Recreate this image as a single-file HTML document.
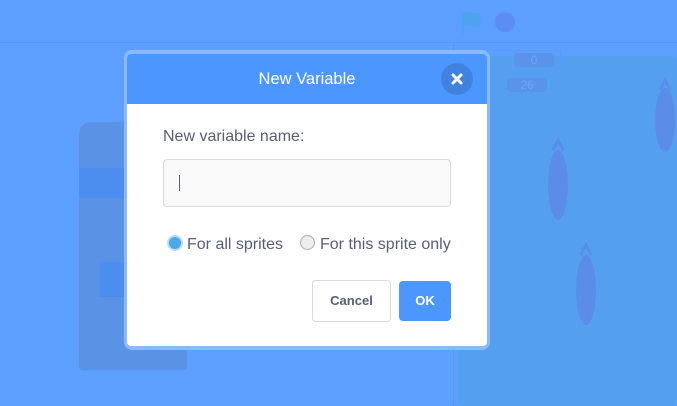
<!DOCTYPE html>
<html><head><style>
body{margin:0;width:677px;height:406px;background:#5c9fff;position:relative;overflow:hidden;font-family:"Liberation Sans",sans-serif}
.a{position:absolute}
</style></head><body>
<div class="a" style="left:0;top:0;width:677px;height:42px;background:#5c9fff;border-bottom:1px solid #5597f5"></div>
<div class="a" style="left:453px;top:43px;width:1px;height:363px;background:#5597f5"></div>
<div class="a" style="left:458px;top:56px;width:219px;height:350px;background:#55a0ee;border-radius:6px"></div>
<svg class="a" style="left:460px;top:10px" width="60" height="26"><path d="M3 2v24M3 3c6-3 10 3 17 0v12c-7 3-11-3-17 0z" fill="#4ea3f0" stroke="#4ea3f0"/><circle cx="45" cy="12" r="10" fill="#5b8df5"/></svg>
<div class="a" style="left:485px;top:50px;width:74px;height:18px;border:1px solid #5a9af8;border-radius:4px"></div>
<div class="a" style="left:514px;top:53px;width:40px;height:14px;background:#5b93ea;border-radius:4px;color:#6aa7f5;font-size:12px;text-align:center">0</div>
<div class="a" style="left:480px;top:75px;width:74px;height:18px;border:1px solid #5a9af8;border-radius:4px"></div>
<div class="a" style="left:507px;top:78px;width:40px;height:14px;background:#5b93ea;border-radius:4px;color:#6aa7f5;font-size:12px;text-align:center">26</div>
<svg class="a" style="left:535px;top:75px" width="142" height="260" fill="#5b8de8">
<ellipse cx="130" cy="45" rx="10" ry="32"/><ellipse cx="23" cy="110" rx="10" ry="35"/><ellipse cx="51" cy="215" rx="10" ry="35"/>
<path d="M125 15l5-10 5 10M18 75l5-10 5 10M46 180l5-10 5 10" stroke="#5b8de8" stroke-width="3" fill="none"/></svg>
<div class="a" style="left:79px;top:122px;width:108px;height:248px;background:#5a92e6;border-radius:12px 12px 4px 4px"></div>
<div class="a" style="left:79px;top:168px;width:50px;height:30px;background:#4c8df0"></div>
<div class="a" style="left:100px;top:262px;width:30px;height:35px;background:#4c8df0"></div>
<div class="a" style="left:124px;top:50px;width:366px;height:300px;background:#8ab9ff;border-radius:8px"></div>
<div class="a" style="left:127px;top:54px;width:360px;height:292px;background:#fff;border-radius:4px;overflow:hidden">
 <div style="height:50px;background:#4c97ff;color:#fff;font-size:16.5px;text-align:center;line-height:50px">New Variable</div>
 <div class="a" style="left:314px;top:9px;width:32px;height:32px;border-radius:50%;background:#3f83de"></div>
 <svg class="a" style="left:324px;top:19px" width="12" height="12"><path d="M2 2l8 8M10 2l-8 8" stroke="#fff" stroke-width="3" stroke-linecap="round"/></svg>
 <div class="a" style="left:36px;top:74px;color:#575e75;font-size:16px">New variable name:</div>
 <div class="a" style="left:36px;top:105px;width:286px;height:46px;border:1px solid #d9d9d9;border-radius:4px;background:#f9f9f9"></div>
 <div class="a" style="left:52px;top:121px;width:1px;height:16px;background:#575e75"></div>
 <div class="a" style="left:40px;top:181px;width:12px;height:12px;border-radius:50%;background:#4ca8e8;border:2px solid #b8dcf5"></div>
 <div class="a" style="left:60px;top:182px;color:#575e75;font-size:16px">For all sprites</div>
 <div class="a" style="left:173px;top:181px;width:13px;height:13px;border-radius:50%;background:#eee;border:1px solid #aaa"></div>
 <div class="a" style="left:193px;top:182px;color:#575e75;font-size:16px">For this sprite only</div>
 <div class="a" style="left:185px;top:226px;width:77px;height:40px;border:1px solid #d9d9d9;border-radius:4px;color:#575e75;font-size:13px;font-weight:bold;text-align:center;line-height:40px">Cancel</div>
 <div class="a" style="left:272px;top:227px;width:52px;height:40px;background:#4c97ff;border-radius:4px;color:#fff;font-size:13px;font-weight:bold;text-align:center;line-height:40px">OK</div>
</div>
</body></html>
